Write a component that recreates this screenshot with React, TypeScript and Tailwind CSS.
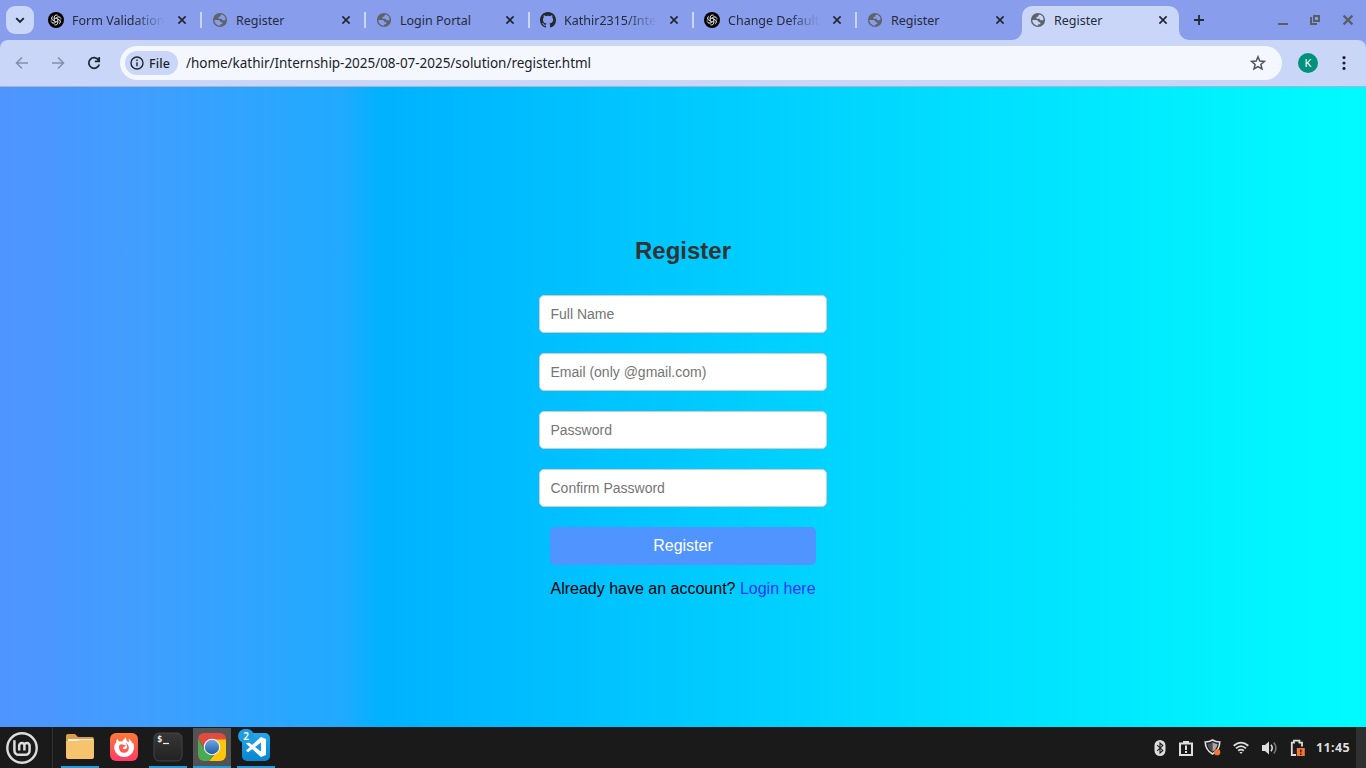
import React from "react";

const uiFont = "font-['Noto_Sans','Open_Sans',sans-serif]";

function Globe() {
  return (
    <svg width="16" height="16" viewBox="0 0 16 16" className="shrink-0">
      <circle cx="8" cy="8" r="7.1" fill="#5f6368" />
      <path d="M2.3 7.9H6C7.9 7.9 8.6 8.8 8.6 10.3H10.3V12.2H8.2V13.7A5.7 5.7 0 0 1 2.3 7.9Z" className="fill-current" />
      <path d="M9.8 2.6A5.7 5.7 0 0 1 13.6 7.4C13 8.2 12 8.3 11.3 8.2C10.2 8.2 9.8 7.6 9.8 6.7H7.2C6.2 6.6 6 5.4 6.9 4.7H8.2C8.3 3.6 8.9 3 9.8 2.6Z" className="fill-current" />
    </svg>
  );
}

function OpenAI() {
  return (
    <svg width="16" height="16" viewBox="0 0 16 16" className="shrink-0">
      <circle cx="8" cy="8" r="8" fill="#000" />
      <g fill="none" stroke="#dcdcdc" strokeWidth="0.7">
        {[0, 60, 120, 180, 240, 300].map((a) => (
          <path key={a} transform={`rotate(${a} 8 8)`} d="M6.2 9V5.2A2.4 2.4 0 0 1 10.2 3.6M6.4 6.9L9.7 5A2.3 2.3 0 0 1 12.5 6" />
        ))}
      </g>
    </svg>
  );
}

function GitHub() {
  return (
    <svg width="16" height="16" viewBox="0 0 16 16" className="shrink-0" fill="#24292f">
      <path d="M8 0C3.58 0 0 3.58 0 8c0 3.54 2.29 6.53 5.47 7.59.4.07.55-.17.55-.38 0-.19-.01-.82-.01-1.49-2.01.37-2.53-.49-2.69-.94-.09-.23-.48-.94-.82-1.13-.28-.15-.68-.52-.01-.53.63-.01 1.08.58 1.23.82.72 1.21 1.87.87 2.33.66.07-.52.28-.87.51-1.07-1.78-.2-3.64-.89-3.64-3.95 0-.87.31-1.59.82-2.15-.08-.2-.36-1.02.08-2.12 0 0 .67-.21 2.2.82.64-.18 1.32-.27 2-.27s1.36.09 2 .27c1.53-1.04 2.2-.82 2.2-.82.44 1.1.16 1.92.08 2.12.51.56.82 1.27.82 2.15 0 3.07-1.87 3.75-3.65 3.95.29.25.54.73.54 1.48 0 1.07-.01 1.93-.01 2.2 0 .21.15.46.55.38A8.01 8.01 0 0 0 16 8c0-4.42-3.58-8-8-8Z" />
    </svg>
  );
}

type Icon = "globe" | "openai" | "github";

function TabContent({ icon, title, fade, active, tight }: { icon: Icon; title: string; fade?: boolean; active?: boolean; tight?: boolean }) {
  return (
    <>
      <span className={active ? "text-[#cad6f8]" : "text-[#889dec]"}>
        {icon === "globe" ? <Globe /> : icon === "openai" ? <OpenAI /> : <GitHub />}
      </span>
      <span
        className={
          "ml-2 mt-px shrink-0 whitespace-nowrap text-[12.5px] leading-4 text-[#262b3a] " +
          (tight ? "w-[93px] " : "w-[94px] ") +
          (fade ? "[mask-image:linear-gradient(to_right,#000_65%,transparent_99%)]" : "")
        }
      >
        {title}
      </span>
      <svg width="16" height="16" viewBox="0 0 16 16" className="ml-2 shrink-0" stroke="#20242f" strokeWidth="1.6">
        <path d="M4.4 4.4L11.6 11.6M11.6 4.4L4.4 11.6" />
      </svg>
    </>
  );
}

const tabs: { icon: Icon; title: string; fade?: boolean; tight?: boolean; width: string }[] = [
  { icon: "openai", title: "Form Validation", fade: true, width: "w-[164px]" },
  { icon: "globe", title: "Register", width: "w-[164px]" },
  { icon: "globe", title: "Login Portal", width: "w-[164px]" },
  { icon: "github", title: "Kathir2315/Inte", fade: true, width: "w-[164px]" },
  { icon: "openai", title: "Change Default", fade: true, tight: true, width: "w-[163px]" },
  { icon: "globe", title: "Register", tight: true, width: "w-[155px]" },
];

function TabStrip() {
  return (
    <div className="flex h-10 bg-[#889dec]">
      <button className="ml-1.5 mt-1.5 flex h-7 w-7 shrink-0 items-center justify-center rounded-[9px] bg-[#cad6f8]">
        <svg width="12" height="12" viewBox="0 0 12 12" fill="none" stroke="#1b1f2a" strokeWidth="1.8"><path d="M2.2 4.2L6 8L9.8 4.2" /></svg>
      </button>
      <div className="ml-1 flex">
        {tabs.map((t, i) => (
          <div key={i} className={"flex h-10 items-center pl-[10px] " + t.width}>
            <TabContent icon={t.icon} title={t.title} fade={t.fade} tight={t.tight} />
            {i < 5 && <i className="ml-[10px] h-4 w-[2px] shrink-0 bg-[#cad6f8]" />}
          </div>
        ))}
      </div>
      <svg width="10" height="10" viewBox="0 0 10 10" className="shrink-0 self-end" fill="#cad6f8"><path d="M10 0V10H0A10 10 0 0 0 10 0Z" /></svg>
      <div className="mt-1.5 flex h-[34px] w-[157px] shrink-0 items-center rounded-t-[10px] bg-[#cad6f8] pb-1.5 pl-2">
        <TabContent icon="globe" title="Register" active tight />
      </div>
      <svg width="10" height="10" viewBox="0 0 10 10" className="shrink-0 self-end" fill="#cad6f8"><path d="M0 0V10H10A10 10 0 0 1 0 0Z" /></svg>
      <svg width="12" height="12" viewBox="0 0 12 12" className="ml-[4px] mt-[14px] shrink-0" stroke="#252a38" strokeWidth="1.8"><path d="M6 1V11M1 6H11" /></svg>
      <div className="ml-auto mr-[10px] mt-3 flex gap-4 text-[#5c5e66]">
        <svg width="16" height="16" viewBox="0 0 16 16" stroke="currentColor" strokeWidth="2"><path d="M2 12H12" /></svg>
        <svg width="16" height="16" viewBox="0 0 16 16" stroke="currentColor" strokeWidth="2" fill="none"><path d="M6 4H11V9H6ZM3 5V12H9" /></svg>
        <svg width="16" height="16" viewBox="0 0 16 16" stroke="currentColor" strokeWidth="2.2"><path d="M3.6 3.6L12.4 12.4M12.4 3.6L3.6 12.4" /></svg>
      </div>
    </div>
  );
}

function Toolbar() {
  return (
    <div className="h-[47px] bg-[#889dec]">
      <div className="flex h-[47px] items-center rounded-t-[8px] border-b border-[#a8b3cf] bg-[#cad6f8]">
        <svg width="16" height="16" viewBox="0 0 16 16" className="ml-[14px]" fill="none" stroke="#8490ae" strokeWidth="1.6"><path d="M14 8H3M8 2.5L2.5 8L8 13.5" /></svg>
        <svg width="16" height="16" viewBox="0 0 16 16" className="ml-5" fill="none" stroke="#8490ae" strokeWidth="1.6"><path d="M2 8H13M8 2.5L13.5 8L8 13.5" /></svg>
        <svg width="16" height="16" viewBox="0 0 16 16" className="ml-5" fill="none" stroke="#20242f" strokeWidth="1.7"><path d="M12.6 5.2A5.3 5.3 0 1 0 13.2 9.4M13.2 2V6.3H8.8" /></svg>
        <div className="ml-[18px] flex h-[34px] w-[1162px] items-center rounded-full bg-[#f4f7fe] pl-[5px]">
          <div className="flex h-6 w-[53px] items-center rounded-full bg-[#cad6f8] pl-[5px]">
            <svg width="14" height="14" viewBox="0 0 14 14" fill="none" stroke="#20242f" strokeWidth="1.4"><circle cx="7" cy="7" r="6" /><path d="M7 6.2V10.2M7 3.6V5" /></svg>
            <span className="ml-[5px] mt-px text-[12.5px] font-medium leading-4 tracking-[0.15px] text-[#1c1f28]">File</span>
          </div>
          <span className="ml-2 whitespace-nowrap text-[13.5px] leading-5 tracking-[-0.03px] text-[#20232b]">/home/kathir/Internship-2025/08-07-2025/solution/register.html</span>
          <svg width="16" height="16" viewBox="0 0 16 16" className="ml-auto mr-4" fill="none" stroke="#50545e" strokeWidth="1.5"><path d="M8 1.8L9.8 6.1L14.4 6.4L10.9 9.4L12 13.9L8 11.5L4 13.9L5.1 9.4L1.6 6.4L6.2 6.1Z" /></svg>
        </div>
        <div className="ml-4 flex h-5 w-5 items-center justify-center rounded-full bg-[#00917c] text-[11px] text-white">K</div>
        <svg width="4" height="16" viewBox="0 0 4 16" className="ml-6" fill="#20242f"><circle cx="2" cy="2.6" r="1.6" /><circle cx="2" cy="8" r="1.6" /><circle cx="2" cy="13.4" r="1.6" /></svg>
      </div>
    </div>
  );
}

const fields = ["Full Name", "Email (only @gmail.com)", "Password", "Confirm Password"];

function RegisterPage() {
  return (
    <main className="flex h-[640px] flex-col items-center bg-[linear-gradient(to_right,#4f94ff_0px,#3f9fff_150px,#1faaff_345px,#00b2ff_380px,#00c9ff_683px,#00e0ff_990px,#00f7ff_1300px,#00fbff_1366px)] pt-[150px] font-['Liberation_Sans',sans-serif]">
      <h2 className="text-[24px] font-bold leading-7 text-[#333]">Register</h2>
      <form className="mt-[30px] flex flex-col items-center gap-5">
        {fields.map((f) => (
          <input key={f} placeholder={f} className="h-[38px] w-[288px] rounded-[5px] border border-[#ccc] bg-white px-[10.5px] text-[14px] placeholder:text-[#757575]" />
        ))}
        <button type="button" className="h-[38px] w-[266px] rounded-[5px] bg-[#4f94ff] text-[16px] text-white">Register</button>
      </form>
      <p className="mt-[15px] text-[16px] leading-[18px] text-black">
        Already have an account? <a className="text-[#3333ff]">Login here</a>
      </p>
    </main>
  );
}

function Taskbar() {
  return (
    <footer className="flex h-[41px] bg-[#1a1a1a]">
      <svg width="32" height="32" viewBox="0 0 32 32" className="ml-[6px] mt-[5px] shrink-0" fill="none" stroke="#dcdcdc">
        <circle cx="16" cy="16" r="14.7" strokeWidth="2.4" />
        <path d="M8.4 8.2V18.6A4.2 4.2 0 0 0 12.6 22.8H19.4A4.2 4.2 0 0 0 23.6 18.6V13.6A2.6 2.6 0 0 0 18.4 13.6V18.6M18.4 13.6A2.6 2.6 0 0 0 13.2 13.6V18.6" strokeWidth="2.5" />
      </svg>
      <div className="ml-[14px] h-full w-px bg-[#303030]" />
      <div className="ml-2 flex gap-[6px] pt-px">
        <Task running>
          <svg width="30" height="28" viewBox="0 0 30 28"><path d="M1 4Q1 2 3 2H10L13 5H27Q29 5 29 7V14H1Z" fill="#d9a047" /><path d="M3 7H28V12H3Z" fill="#eee" /><path d="M1 9H12L15 8H29V25Q29 27 27 27H3Q1 27 1 25Z" fill="#f7c36d" /></svg>
        </Task>
        <Task>
          <svg width="30" height="30" viewBox="0 0 30 30">
            <defs><linearGradient id="ff" x1="0" y1="0" x2="0" y2="1"><stop stopColor="#ff7a36" /><stop offset="1" stopColor="#ff3a68" /></linearGradient></defs>
            <rect x="1" y="1" width="28" height="28" rx="6" fill="url(#ff)" />
            <path d="M8.6 6.8Q9 8.8 10.4 9.6Q12 9 13.2 9.6Q14.2 7.2 16.8 5.4Q16.8 8.4 19.4 10.4Q20.4 8.8 19.6 6.4Q22.6 8.4 23.2 11.4L24 10.4Q25.4 13 25 16.2A10 10 0 0 1 5.2 16.6Q4.8 12.6 7.2 10.2Q7.2 8.2 8.6 6.8Z" fill="#fff" />
            <path d="M10.6 12.8Q12.8 11.8 14.4 12.8L16.8 13.2Q16 14.8 14 15.2Q13.4 17 15.6 17.2Q18.4 17 18.2 14.2Q17.8 12 16.4 10.8Q20.2 12.8 19.8 16.4A4.9 4.9 0 0 1 10.2 17Q9.6 14.6 10.6 12.8Z" fill="#ff5a4c" />
          </svg>
        </Task>
        <Task running>
          <svg width="30" height="30" viewBox="0 0 30 30">
            <defs><linearGradient id="tm" x1="0" y1="0" x2="0" y2="1"><stop stopColor="#373737" /><stop offset="1" stopColor="#222" /></linearGradient></defs>
            <rect x="1" y="1" width="28" height="28" rx="5" fill="url(#tm)" stroke="#454545" />
            <text x="4" y="10" fontSize="9" fontWeight="700" fill="#eee" fontFamily="DejaVu Sans Mono, monospace">$</text>
            <path d="M10 11.5H16" stroke="#eee" strokeWidth="1.2" />
          </svg>
        </Task>
        <Task running active>
          <svg width="30" height="30" viewBox="0 0 30 30">
            <defs>
              <clipPath id="cr"><rect x="1" y="1" width="28" height="28" rx="6" /></clipPath>
              <linearGradient id="cb" x1="0" y1="0" x2="0" y2="1"><stop stopColor="#71a7e0" /><stop offset="1" stopColor="#1e5da3" /></linearGradient>
            </defs>
            <g clipPath="url(#cr)"><path d="M0 0H30V8H15L8.5 18L0 4Z" fill="#e34b40" /><path d="M0 4L7.8 18.5L16 23L11.5 30H0Z" fill="#4aa951" /><path d="M15 7.5H30V30H11.5L21.5 17Z" fill="#fbc70b" /></g>
            <circle cx="15" cy="15" r="8.3" fill="#f4f4f4" /><circle cx="15" cy="15" r="7.2" fill="url(#cb)" />
          </svg>
        </Task>
        <Task running badge>
          <svg width="30" height="30" viewBox="0 0 30 30">
            <defs><linearGradient id="vs" x1="0" y1="0" x2="0" y2="1"><stop stopColor="#24a6ec" /><stop offset="1" stopColor="#0786d1" /></linearGradient></defs>
            <rect x="1" y="1" width="28" height="28" rx="5" fill="url(#vs)" />
            <path d="M20 5L25 7V23L20 25L5 11.5L7 9.7L20 19.5V10.5L7 20.3L5 18.5Z" fill="#fff" />
          </svg>
        </Task>
      </div>
      <Tray />
    </footer>
  );
}

function Task({ children, running, active, badge }: { children: React.ReactNode; running?: boolean; active?: boolean; badge?: boolean }) {
  return (
    <div className={"relative flex h-10 w-[38px] justify-center pt-[4px] " + (active ? "bg-[#535353] " : "") + (running ? "border-b-2 border-[#1f9ede]" : "")}>
      {children}
      {badge && <span className="absolute left-px top-px flex h-[14px] w-4 items-center justify-center rounded-full bg-[#1f9ede] text-[10px] font-semibold text-white">2</span>}
    </div>
  );
}

function Tray() {
  return (
    <div className="ml-auto flex items-center text-[#dedede]">
      <svg width="12" height="16" viewBox="0 0 12 16" className="mr-[12px]"><rect x=".5" width="11" height="16" rx="5.5" fill="currentColor" /><path d="M3.2 5.2L8.8 10.4L6 13V3L8.8 5.6L3.2 10.8" fill="none" stroke="#1a1a1a" strokeWidth="1.1" /></svg>
      <svg width="16" height="16" viewBox="0 0 16 16" className="mr-[10px]" fill="none" stroke="currentColor" strokeWidth="2"><path d="M2 3.5H14V15H2Z" /><path d="M5 2H11M8 5.5V10M8 11V13" /></svg>
      <svg width="18" height="17" viewBox="0 0 18 17" className="mr-[11px]"><path d="M8.5 1Q11.5 3 15.8 3Q15.5 11 8.5 15Q1.5 11 1.2 3Q5.5 3 8.5 1Z" fill="none" stroke="currentColor" strokeWidth="1.6" /><path d="M8.5 3.2Q5.8 4.8 3.4 5Q4 10 8.5 12.8Z" fill="#4d4d4d" /><path d="M8.5 3.2Q11 4.8 13.6 5Q13 10 8.5 12.8Z" fill="#a8a8a8" /><circle cx="13.2" cy="13.2" r="3.1" fill="#f37835" /></svg>
      <svg width="16" height="14" viewBox="0 0 16 14" className="mr-[12px]" fill="none" stroke="currentColor" strokeWidth="1.8"><path d="M.7 4.8Q8-1.6 15.3 4.8M3 7.4Q8 2.9 13 7.4M5.2 9.8Q8 7.4 10.8 9.8" /><path d="M6.4 11L8 13L9.6 11" fill="currentColor" stroke="none" /></svg>
      <svg width="17" height="16" viewBox="0 0 17 16" className="mr-[12px]" fill="none" stroke="currentColor" strokeWidth="1.6"><path d="M1 5H4L8 1.5V14.5L4 11H1Z" fill="currentColor" stroke="none" /><path d="M10 4.8Q12.4 8 10 11.2" /><path d="M12.8 2.5Q17 8 12.8 13.5" stroke="#777" /></svg>
      <svg width="16" height="17" viewBox="0 0 16 17" className="mr-[10px]"><path d="M6 16H1.8V3.6H4V1.6H9.4V3.6H12V7.5" fill="none" stroke="currentColor" strokeWidth="1.8" /><path d="M3.4 13H5" stroke="#d00" /><rect x="6.8" y="9" width="8" height="8" fill="#f37835" /><path d="M10.8 10.5V13.4M10.8 14.4V16" stroke="#1a1a1a" strokeWidth="1.4" /></svg>
      <span className="w-[34px] whitespace-nowrap text-[12.5px] font-bold leading-4 tracking-[0.4px]">11:45</span>
      <div className="ml-[6px] h-full w-[10px] bg-[#303030]" />
    </div>
  );
}

export default function App() {
  return (
    <div className={"flex h-[768px] w-[1366px] flex-col overflow-hidden " + uiFont}>
      <TabStrip />
      <Toolbar />
      <RegisterPage />
      <Taskbar />
    </div>
  );
}
